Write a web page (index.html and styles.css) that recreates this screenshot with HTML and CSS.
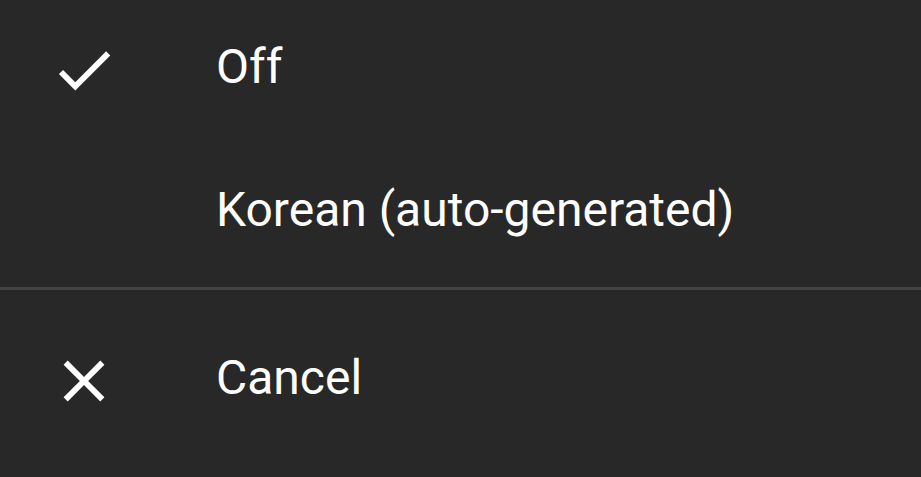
FILE: index.html
```html
<!DOCTYPE html>
<html lang="en">
<head>
    <meta charset="UTF-8">
    <title>Subtitles</title>
    <link rel="stylesheet" href="styles.css">
</head>
<body>
    <div id="sheet">
        <div class="item first">
            <span class="icon">
                <svg viewBox="0 0 24 24" width="70" height="70"><path fill="#fff" d="M9 16.17L4.83 12l-1.42 1.41L9 19 21 7l-1.41-1.41z"/></svg>
            </span>
            <span class="label">Off</span>
        </div>
        <div class="item second">
            <span class="icon"></span>
            <span class="label">Korean (auto-generated)</span>
        </div>
        <div class="divider"></div>
        <div class="item cancel">
            <span class="icon">
                <svg viewBox="0 0 24 24" width="70" height="70"><path fill="#fff" d="M19 6.41L17.59 5 12 10.59 6.41 5 5 6.41 10.59 12 5 17.59 6.41 19 12 13.41 17.59 19 19 17.59 13.41 12z"/></svg>
            </span>
            <span class="label">Cancel</span>
        </div>
    </div>
</body>
</html>
```

FILE: styles.css
```css
html, body{
    margin:0;
    padding:0;
    background-color:#282828;
}
#sheet{
    width:921px;
    height:477px;
    font-family:Roboto, "Liberation Sans", sans-serif;
    color:#fff;
}
#sheet .item{
    display:flex;
    align-items:center;
    padding-left:49px;
}
#sheet .first{
    height:133px;
}
#sheet .second{
    height:154px;
}
#sheet .cancel{
    height:176px;
}
#sheet .icon{
    display:block;
    width:70px;
    height:70px;
    margin-right:97px;
    margin-top:6px;
}
#sheet .icon svg{
    display:block;
}
#sheet .label{
    font-size:48px;
    line-height:1;
}
#sheet .divider{
    height:3px;
    background-color:#444444;
}
```
